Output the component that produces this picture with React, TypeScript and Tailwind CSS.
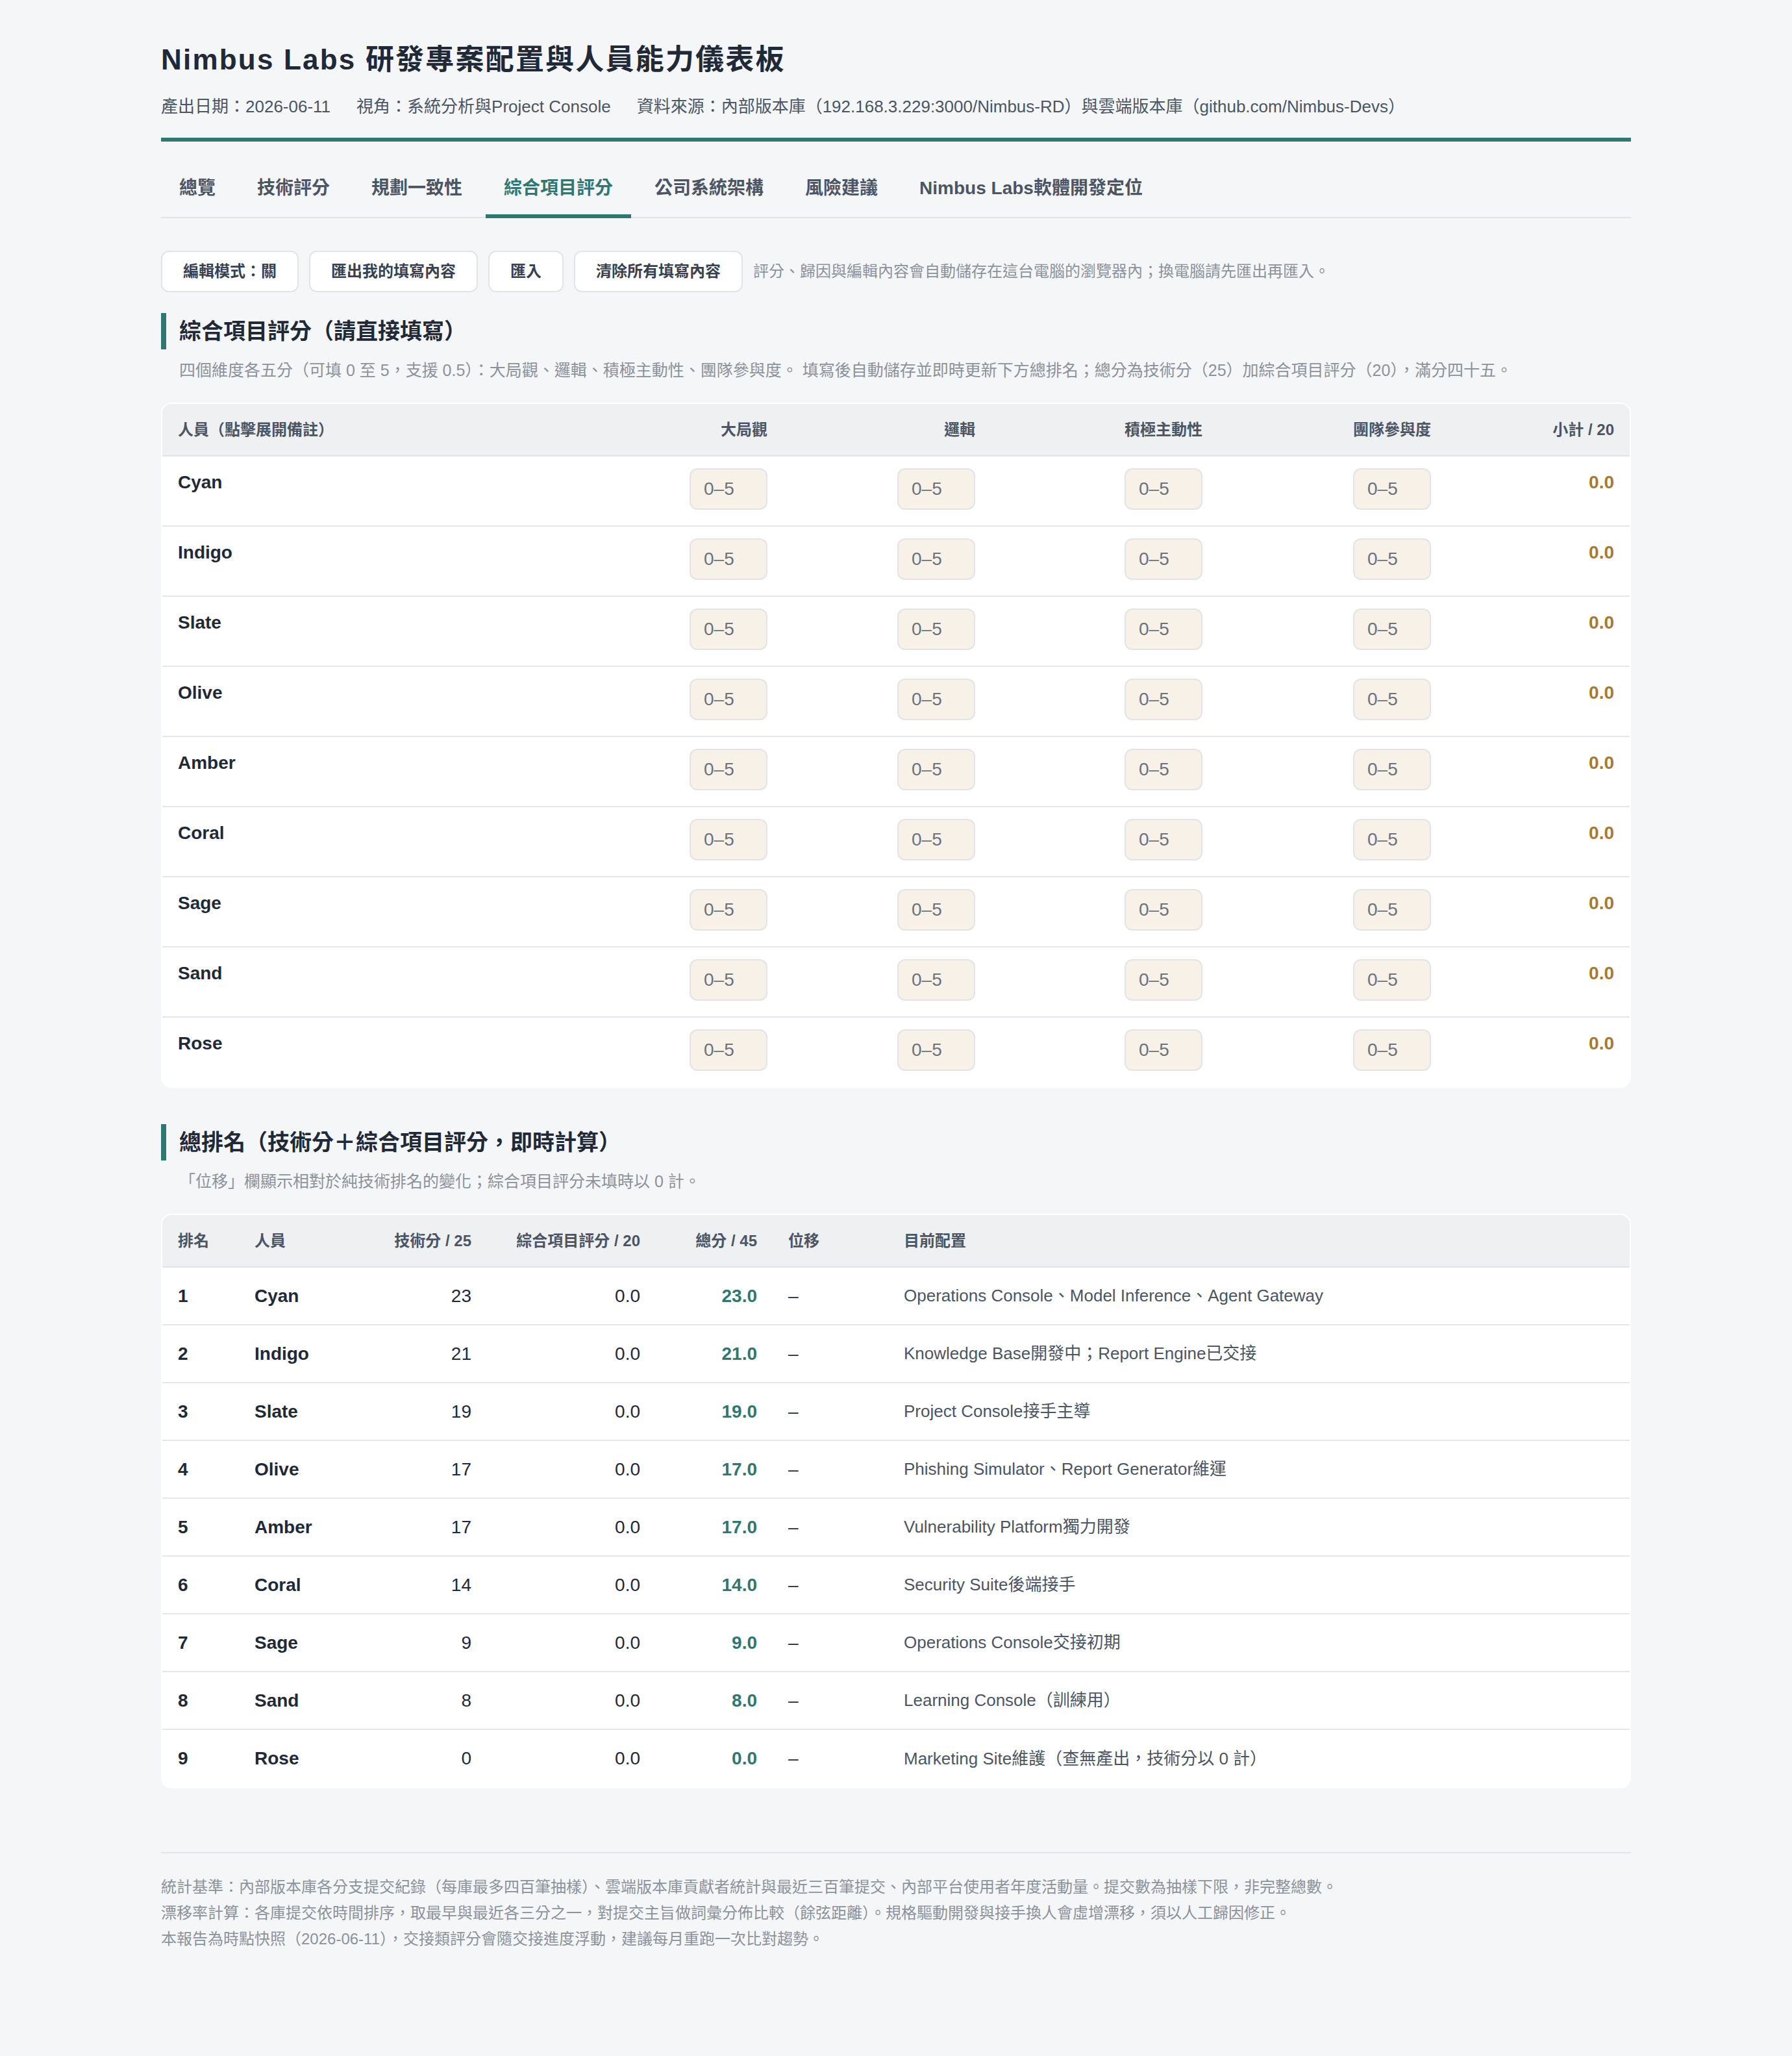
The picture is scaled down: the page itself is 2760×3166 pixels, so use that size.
import React from 'react';

const tabs = ['總覽', '技術評分', '規劃一致性', '綜合項目評分', '公司系統架構', '風險建議', 'Nimbus Labs軟體開發定位'];
const activeTab = 3;

const actions = ['編輯模式：關', '匯出我的填寫內容', '匯入', '清除所有填寫內容'];

const dimensions = ['大局觀', '邏輯', '積極主動性', '團隊參與度'];

const people = ['Cyan', 'Indigo', 'Slate', 'Olive', 'Amber', 'Coral', 'Sage', 'Sand', 'Rose'];

const ranking = [
  { rank: 1, name: 'Cyan', tech: 23, role: 'Operations Console、Model Inference、Agent Gateway' },
  { rank: 2, name: 'Indigo', tech: 21, role: 'Knowledge Base開發中；Report Engine已交接' },
  { rank: 3, name: 'Slate', tech: 19, role: 'Project Console接手主導' },
  { rank: 4, name: 'Olive', tech: 17, role: 'Phishing Simulator、Report Generator維運' },
  { rank: 5, name: 'Amber', tech: 17, role: 'Vulnerability Platform獨力開發' },
  { rank: 6, name: 'Coral', tech: 14, role: 'Security Suite後端接手' },
  { rank: 7, name: 'Sage', tech: 9, role: 'Operations Console交接初期' },
  { rank: 8, name: 'Sand', tech: 8, role: 'Learning Console（訓練用）' },
  { rank: 9, name: 'Rose', tech: 0, role: 'Marketing Site維護（查無產出，技術分以 0 計）' },
];

function SectionTitle({ title, note }: { title: string; note: string }) {
  return (
    <div>
      <h2 className="border-l-4 border-[#2f7872] pl-2.5 text-[17px] font-bold leading-7 text-[#1f2937]">{title}</h2>
      <p className="mt-[7px] pl-3.5 text-[12.5px] leading-[18px] text-[#8b929b]">{note}</p>
    </div>
  );
}

export default function App() {
  return (
    <div className="[zoom:2] min-h-[1583px] bg-[#f5f6f8] font-['Liberation_Sans','Noto_Sans_CJK_TC',sans-serif] text-[#1f2937]">
      <div className="mx-auto w-[1132px] pt-[30px] pb-20">
        {/* header */}
        <header className="border-b-[3px] border-[#2f7872] pb-[14px]">
          <h1 className="text-[22px] font-bold leading-8 tracking-[1.1px] text-[#1f2937]">
            Nimbus Labs 研發專案配置與人員能力儀表板
          </h1>
          <div className="mt-2.5 flex gap-5 text-[13px] leading-5 text-[#4b5563]">
            <span>產出日期：2026-06-11</span>
            <span>視角：系統分析與Project Console</span>
            <span>資料來源：內部版本庫（192.168.3.229:3000/Nimbus-RD）與雲端版本庫（github.com/Nimbus-Devs）</span>
          </div>
        </header>

        {/* tabs */}
        <nav className="mt-3 flex gap-1 border-b border-[#e2e4e8]">
          {tabs.map((t, i) => (
            <div
              key={t}
              className={
                i === activeTab
                  ? '-mb-px border-b-[3px] border-[#2f7872] px-3.5 pt-[14px] pb-[10px] text-[14px] font-semibold leading-5 text-[#2f7872]'
                  : '-mb-px border-b-[3px] border-transparent px-3.5 pt-[14px] pb-[10px] text-[14px] font-semibold leading-5 text-[#4b5563]'
              }
            >
              {t}
            </div>
          ))}
        </nav>

        {/* toolbar */}
        <div className="mt-[25px] flex items-center gap-2">
          {actions.map((a) => (
            <button
              key={a}
              className="h-8 rounded-md border border-[#e2e4e8] bg-white px-4 text-[12px] font-semibold text-[#374151]"
            >
              {a}
            </button>
          ))}
          <span className="text-[12px] text-[#8b929b]">
            評分、歸因與編輯內容會自動儲存在這台電腦的瀏覽器內；換電腦請先匯出再匯入。
          </span>
        </div>

        {/* score entry */}
        <section className="mt-[16px]">
          <SectionTitle
            title="綜合項目評分（請直接填寫）"
            note="四個維度各五分（可填 0 至 5，支援 0.5）：大局觀、邏輯、積極主動性、團隊參與度。 填寫後自動儲存並即時更新下方總排名；總分為技術分（25）加綜合項目評分（20），滿分四十五。"
          />
          <div className="mt-4 overflow-hidden rounded-lg border border-white bg-white">
            <table className="w-full table-fixed border-collapse">
              <colgroup>
                <col className="w-[318px]" />
                <col className="w-[160px]" />
                <col className="w-[160px]" />
                <col className="w-[175px]" />
                <col className="w-[176px]" />
                <col />
              </colgroup>
              <thead>
                <tr className="h-10 border-b border-[#e2e4e8] bg-[#eef0f2] text-[12px] font-semibold text-[#4b5563]">
                  <th className="px-3 text-left font-semibold">人員（點擊展開備註）</th>
                  {dimensions.map((d) => (
                    <th key={d} className="px-3 text-right font-semibold">{d}</th>
                  ))}
                  <th className="px-3 text-right font-semibold">小計 / 20</th>
                </tr>
              </thead>
              <tbody>
                {people.map((p, i) => (
                  <tr key={p} className={i < people.length - 1 ? 'border-b border-[#e5e7eb]' : ''}>
                    <td className="px-3 pt-[9px] pb-3 align-top text-[14px] font-semibold leading-[22px]">{p}</td>
                    {dimensions.map((d) => (
                      <td key={d} className="px-3 pt-[9px] pb-3 text-right align-top">
                        <input
                          placeholder="0–5"
                          className="h-8 w-[60px] rounded-md border border-[#e2e4e8] bg-[#f7f1e7] px-2.5 text-[14px] text-[#374151] placeholder:text-[#6b7280]"
                        />
                      </td>
                    ))}
                    <td className="px-3 pt-[9px] pb-3 text-right align-top text-[14px] font-semibold leading-[22px] text-[#a8792f]">
                      0.0
                    </td>
                  </tr>
                ))}
              </tbody>
            </table>
          </div>
        </section>

        {/* overall ranking */}
        <section className="mt-7">
          <SectionTitle
            title="總排名（技術分＋綜合項目評分，即時計算）"
            note="「位移」欄顯示相對於純技術排名的變化；綜合項目評分未填時以 0 計。"
          />
          <div className="mt-4 overflow-hidden rounded-lg border border-white bg-white">
            <table className="w-full table-fixed border-collapse">
              <colgroup>
                <col className="w-[59px]" />
                <col className="w-[90px]" />
                <col className="w-[101px]" />
                <col className="w-[130px]" />
                <col className="w-[90px]" />
                <col className="w-[89px]" />
                <col />
              </colgroup>
              <thead>
                <tr className="h-10 border-b border-[#e2e4e8] bg-[#eef0f2] text-[12px] text-[#4b5563]">
                  <th className="px-3 text-left font-semibold">排名</th>
                  <th className="px-3 text-left font-semibold">人員</th>
                  <th className="px-3 text-right font-semibold">技術分 / 25</th>
                  <th className="px-3 text-right font-semibold">綜合項目評分 / 20</th>
                  <th className="px-3 text-right font-semibold">總分 / 45</th>
                  <th className="px-3 text-left font-semibold">位移</th>
                  <th className="px-3 text-left font-semibold">目前配置</th>
                </tr>
              </thead>
              <tbody>
                {ranking.map((r, i) => (
                  <tr
                    key={r.name}
                    className={i < ranking.length - 1 ? 'h-[44.5px] border-b border-[#e5e7eb] text-[14px]' : 'h-[44.5px] text-[14px]'}
                  >
                    <td className="px-3 font-semibold">{r.rank}</td>
                    <td className="px-3 font-semibold">{r.name}</td>
                    <td className="px-3 text-right">{r.tech}</td>
                    <td className="px-3 text-right">0.0</td>
                    <td className="px-3 text-right font-semibold text-[#2f7872]">{r.tech.toFixed(1)}</td>
                    <td className="px-3">–</td>
                    <td className="px-3 text-[13px] text-[#4b5563]">{r.role}</td>
                  </tr>
                ))}
              </tbody>
            </table>
          </div>
        </section>

        {/* footer notes */}
        <footer className="mt-[49px] border-t border-[#e2e4e8] pt-4 text-[12px] leading-5 text-[#8b929b]">
          <p>統計基準：內部版本庫各分支提交紀錄（每庫最多四百筆抽樣）、雲端版本庫貢獻者統計與最近三百筆提交、內部平台使用者年度活動量。提交數為抽樣下限，非完整總數。</p>
          <p>漂移率計算：各庫提交依時間排序，取最早與最近各三分之一，對提交主旨做詞彙分佈比較（餘弦距離）。規格驅動開發與接手換人會虛增漂移，須以人工歸因修正。</p>
          <p>本報告為時點快照（2026-06-11），交接類評分會隨交接進度浮動，建議每月重跑一次比對趨勢。</p>
        </footer>
      </div>
    </div>
  );
}
